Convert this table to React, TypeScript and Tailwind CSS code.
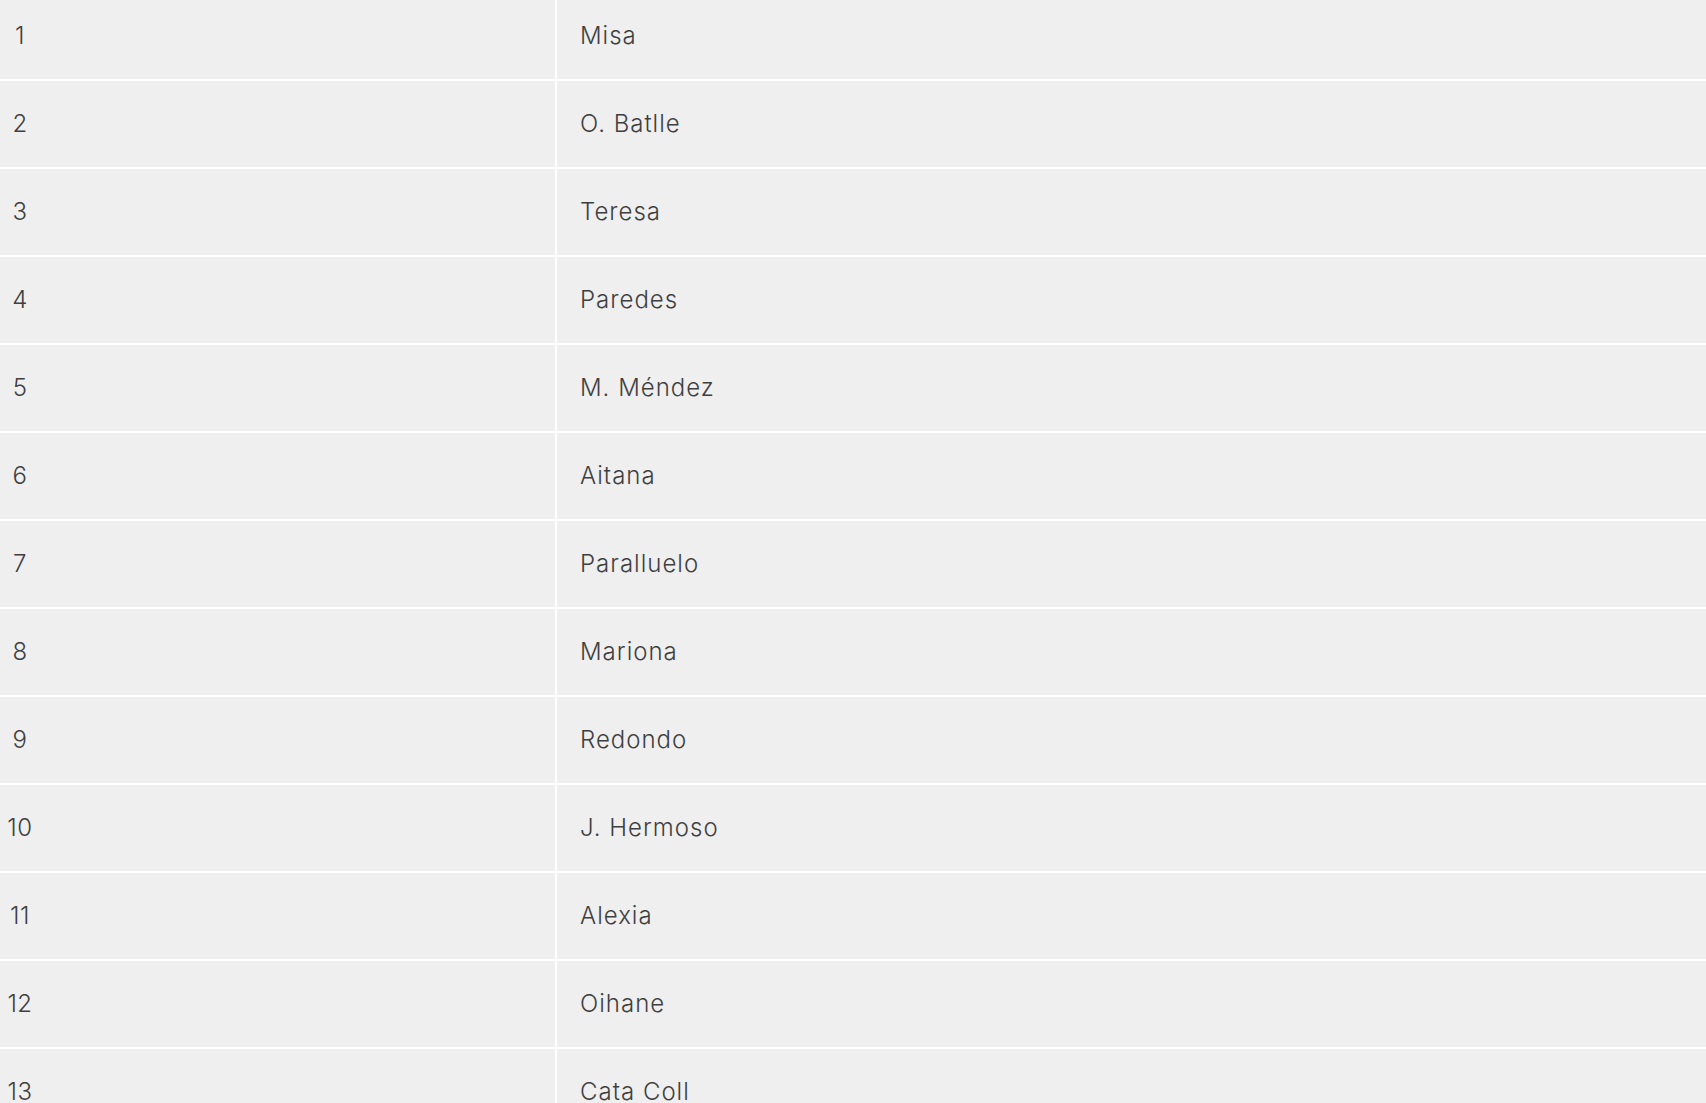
import React from "react";

const rows = [
  "Misa",
  "O. Batlle",
  "Teresa",
  "Paredes",
  "M. Méndez",
  "Aitana",
  "Paralluelo",
  "Mariona",
  "Redondo",
  "J. Hermoso",
  "Alexia",
  "Oihane",
  "Cata Coll",
];

export default function App() {
  return (
    <div
      className="w-full h-[1103px] overflow-hidden bg-[#efefef]"
      style={{ fontFamily: "Inter, 'Noto Sans', sans-serif" }}
    >
      <div className="-mt-[7px] flex flex-col">
        {rows.map((name, i) => (
          <div
            key={i}
            className="flex h-[88px] border-b-2 border-white bg-[#efefef] text-[24px] font-light text-[#3f3f3f]"
          >
            <div className="w-[557px] border-r-2 border-white flex items-center">
              <span className="w-[40px] text-center tracking-[0.5px]">{i + 1}</span>
            </div>
            <div className="flex-1 flex items-center pl-[23px] tracking-[1px]">
              {name}
            </div>
          </div>
        ))}
      </div>
    </div>
  );
}
